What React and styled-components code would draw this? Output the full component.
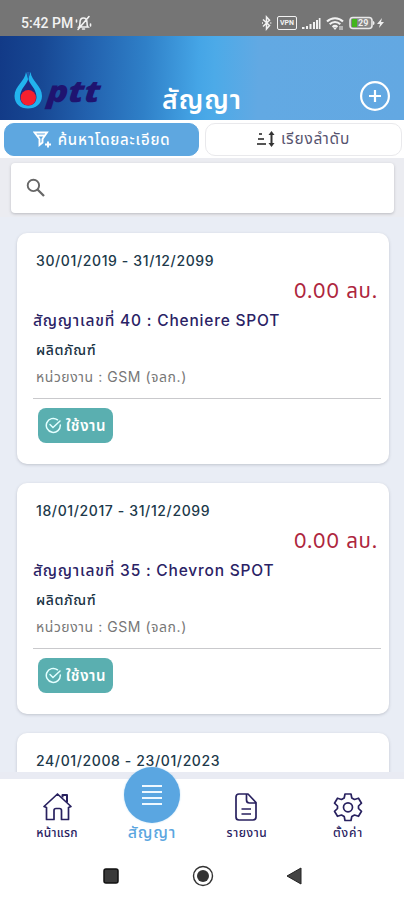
import React from 'react';
import styled, { createGlobalStyle, css } from 'styled-components';

const GlobalStyle = createGlobalStyle`
  * { box-sizing: border-box; }
  body { margin: 0; background: #fff; font-family: "Inter", "Noto Sans Thai", "Noto Sans", sans-serif; }
`;

const Screen = styled.div`
  width: 404px;
  height: 900px;
  display: flex;
  flex-direction: column;
  overflow: hidden;
  background: #fff;
`;

const Text = styled.span`
  display: inline-block;
  white-space: nowrap;
  font-size: ${(p) => p.$size}px;
  font-weight: ${(p) => p.$weight || 400};
  letter-spacing: ${(p) => p.$track || 0}px;
  color: ${(p) => p.$color || 'inherit'};
  line-height: 1.2;
`;

const StatusBar = styled.div`
  flex: none;
  height: 36px;
  background: #757575;
  color: #f2f2f2;
  display: flex;
  justify-content: space-between;
  padding: 10px 19px 0 21px;
`;

const StatusGroup = styled.div`
  display: flex;
  align-items: center;
  height: 26px;
  gap: ${(p) => p.$gap || 0}px;
`;

const Clock = styled(Text)`
  font-family: Roboto, sans-serif;
`;

const Header = styled.header`
  flex: none;
  height: 84px;
  background: linear-gradient(92deg, #123a87 0%, #174793 10%, #2261ae 22%, #2f80c8 36%, #45a5e6 49%, #4caae8 53%, #62a9e3 64%, #63a8e2 100%);
  display: grid;
  grid-template-columns: 135px 1fr 135px;
  padding: 0 13px;
`;

const Brand = styled.div`
  display: flex;
  align-items: flex-start;
  padding-top: 35px;
`;

const BrandName = styled.span`
  font: italic 800 30px/34px "Open Sans", sans-serif;
  color: #1f1470;
  margin-top: 3px;
  margin-left: 3px;
  transform: scaleX(1.17) skewX(-4deg);
  transform-origin: left bottom;
`;

const Title = styled.h1`
  margin: 0;
  padding-top: 46px;
  text-align: center;
  line-height: 1;
  color: #fff;
`;

const AddButton = styled.button`
  justify-self: end;
  margin: 44px 0 0;
  padding: 0;
  width: 32px;
  height: 32px;
  border: 0;
  background: none;
`;

const Tabs = styled.div`
  flex: none;
  height: 38px;
  padding: 3px 2px 0 4px;
  display: grid;
  grid-template-columns: 195px 197px;
  gap: 6px;
  background: #fff;
`;

const Tab = styled.button`
  height: 33px;
  padding: 0;
  border-radius: 10px;
  display: flex;
  align-items: center;
  justify-content: center;
  gap: 6px;
  font-family: inherit;
  border: 1px solid #e9e9ec;
  background: #fff;
  color: #57546f;
  ${(p) =>
    p.$active &&
    css`
      border-color: #5ea7e0;
      background: #5ea7e0;
      color: #fff;
    `}
`;

const SearchArea = styled.div`
  flex: none;
  height: 59px;
  padding: 5px 10px 4px 11px;
  background: #ebecf1;
`;

const SearchBox = styled.div`
  height: 50px;
  border-radius: 4px;
  background: #fff;
  box-shadow: 0 1px 3px rgba(60, 60, 70, 0.28);
  display: flex;
  align-items: center;
  padding-left: 15px;
`;

const List = styled.main`
  flex: none;
  height: 562px;
  padding: 16px 15px 0 17px;
  background: #e9edf5;
  overflow: hidden;
  display: flex;
  flex-direction: column;
  gap: 19px;
  border-bottom: 7px solid #e9ebf3;
`;

const Card = styled.article`
  flex: none;
  height: 231px;
  padding: 13px 8px 0 16px;
  border-radius: 10px;
  background: #fff;
  box-shadow: 0 1px 3px rgba(70, 75, 90, 0.25);
`;

const Row = styled.div`
  height: ${(p) => p.$h}px;
  display: flex;
  align-items: center;
  justify-content: ${(p) => (p.$end ? 'flex-end' : 'flex-start')};
  padding-left: ${(p) => p.$inset || 0}px;
  padding-right: ${(p) => (p.$end ? 3 : 0)}px;
`;

const Divider = styled.hr`
  margin: 8px 0 9px;
  border: 0;
  height: 1px;
  background: #c9c9cc;
`;

const Badge = styled.div`
  width: 75px;
  height: 35px;
  margin-left: 5px;
  border-radius: 8px;
  background: #5aafb0;
  color: #fff;
  display: flex;
  align-items: center;
  justify-content: center;
  gap: 4px;
`;

const BottomNav = styled.nav`
  flex: none;
  height: 73px;
  background: #fff;
  display: grid;
  grid-template-columns: 114px 76px 114px 88px;
`;

const NavItem = styled.a`
  display: flex;
  flex-direction: column;
  align-items: center;
  color: ${(p) => (p.$active ? '#5ba6df' : '#28215f')};
  padding-top: ${(p) => (p.$active ? 0 : 12)}px;
`;

const NavIcon = styled.span`
  width: 32px;
  height: 32px;
  display: block;
`;

const NavLabel = styled(Text)`
  margin-top: ${(p) => p.$gap || 0}px;
`;

const Bubble = styled.span`
  flex: none;
  width: 56px;
  height: 56px;
  margin-top: -12px;
  border-radius: 50%;
  background: #5aa6e1;
  box-shadow: 0 0 2px #b9dcf4;
  display: grid;
  place-content: center;
  gap: 4px;
  z-index: 1;
`;

const Bar = styled.i`
  width: 20px;
  height: 2px;
  background: #eef8ff;
`;

const SystemNav = styled.div`
  flex: none;
  height: 48px;
  padding: 0 102px 0 103px;
  display: flex;
  align-items: center;
  justify-content: space-between;
`;

const Muted = () => (
  <svg width="17" height="16" viewBox="0 0 17 16" fill="none" stroke="currentColor" strokeWidth="1.6" strokeLinecap="round">
    <path d="M4 12h9c-1-1-1-2-1-4.500C12 4.500 10.500 3 8.500 3S5 4.500 5 7.500C5 10 5 11 4 12ZM7.500 14h2M3 14.500 14 1.500M1.500 7V5M15.500 9v2" />
  </svg>
);

const Bluetooth = () => (
  <svg width="11" height="16" viewBox="0 0 11 16" fill="none" stroke="currentColor" strokeWidth="1.5">
    <path d="m2 4.500 6.500 6L5.500 14V2l3 3.300L2 11.500M1 8h1M9.300 8h1" />
  </svg>
);

const VpnBox = styled.span`
  width: 20px;
  height: 14px;
  border: 1.5px solid currentColor;
  border-radius: 2px;
  font: 700 7px/12px Roboto, sans-serif;
  text-align: center;
`;

const Signal = () => (
  <svg width="19" height="13" viewBox="0 0 19 13" fill="currentColor">
    <path d="M0 10h2.500v2H0zM4 9h2v3H4zM7.500 7h2v5h-2zM11 5h2v7h-2zM14 3h2v9h-2zM16.800 1h1.700v11h-1.700z" />
  </svg>
);

const WifiGlyph = () => (
  <svg width="18" height="15" viewBox="0 0 18 15" fill="none" stroke="currentColor" strokeWidth="2">
    <path d="M1 5.500c4.500-4.500 11.500-4.500 16 0M3.700 8.300c3-3 7.600-3 10.600 0M6.500 11c1.500-1.400 3.500-1.400 5 0" />
    <path d="m7 11.500 2 2.500 2-2.500z" fill="currentColor" stroke="none" />
    <path d="M14 10v4M16 10v4" strokeWidth="1" />
  </svg>
);

const Battery = () => (
  <svg width="36" height="14" viewBox="0 0 36 14">
    <rect x="1" y="1.500" width="22" height="11" rx="3" fill="#858585" stroke="#e9e9e9" strokeWidth="1.600" />
    <path d="M3 3h5v8H3z" fill="#43b51e" />
    <path d="M24 5c2 0 2 4 0 4z" fill="#eee" />
    <text x="9" y="10.400" fontFamily="Roboto" fontSize="9" fontWeight="700" fill="#eee">29</text>
    <path d="m33 2-5 6h3l-1 4 5-6h-3z" fill="#eee" />
  </svg>
);

const Flame = () => (
  <svg width="30" height="40" viewBox="0 0 30 40">
    <path d="M13 1C12 10 1.500 15 1.500 25c0 8 6 12.500 13.500 12.500S29 33 29 25C29 15 18.500 10 17.500 1L15.250 8Z" fill="#22b3ee" />
    <path d="M13.800 1 15.250 10 16.700 1Z" fill="#1f5fae" />
    <path d="M15.250 8C13.500 14 7 18 7 26c0 5 3.500 8.500 8.250 8.500S23.500 31 23.500 26c0-8-6.500-12-8.250-18Z" fill="#1d2a83" />
    <circle cx="15.300" cy="26.700" r="7.700" fill="#f5202e" />
  </svg>
);

const Plus = () => (
  <svg width="32" height="32" viewBox="0 0 32 32" fill="none" stroke="#fff">
    <circle cx="16" cy="16" r="13.900" strokeWidth="2.200" />
    <path d="M16 10v12M10 16h12" strokeWidth="2.200" />
  </svg>
);

const Filter = () => (
  <svg width="19" height="18" viewBox="0 0 19 18" fill="none" stroke="currentColor" strokeWidth="1.900">
    <path d="M1.500 1.500h12.500L9.500 8v3.500L6.500 14V8ZM4 4.500h7.500" />
    <path d="M15 10.500v6M12 13.500h6" />
  </svg>
);

const Sort = () => (
  <svg width="18" height="17" viewBox="0 0 18 17" fill="#555">
    <path d="M2 2h3v2H2zM1 7h6v2H1zM0 12h9v2H0z" />
    <path d="m14.500 0 3 4h-2v8h2l-3 4-3-4h2V4h-2z" fill="#333" />
  </svg>
);

const Magnifier = () => (
  <svg width="20" height="20" viewBox="0 0 20 20" fill="none" stroke="#676767" strokeWidth="1.900">
    <circle cx="7.400" cy="7.400" r="5.700" />
    <path d="m11.500 11.500 6.500 6.500" strokeWidth="2.300" />
  </svg>
);

const CheckRing = () => (
  <svg width="17" height="17" viewBox="0 0 17 17" fill="none" stroke="#e4ffff" strokeWidth="1.500" strokeLinecap="round">
    <path d="M12.500 2.800A7 7 0 1 0 15.300 8" />
    <path d="m5 7.500 3 3 7-6.500" />
  </svg>
);

const Home = () => (
  <svg width="32" height="32" viewBox="0 0 32 32" fill="none" stroke="currentColor" strokeWidth="1.700" strokeLinejoin="round">
    <path d="M5.500 28V16.500L3 15.500 16.500 3 30 15.500l-2.500 1V28.500h-7v-9q0-2-2-2H15q-2 0-2 2v9H5.500Z" />
    <path d="M21.500 6.500V4h4.500v7.500" strokeWidth="2" />
  </svg>
);

const Document = () => (
  <svg width="32" height="32" viewBox="0 0 32 32" fill="none" stroke="currentColor" strokeWidth="1.700" strokeLinejoin="round">
    <path d="M17 3H8q-3 0-3 3v20q0 3 3 3h14q3 0 3-3V11.500ZM15.500 3.500V9q0 3 3 3H25M10.500 18h9.500M10.500 23h9.500" />
  </svg>
);

const Gear = () => (
  <svg width="32" height="32" viewBox="0 0 32 32" fill="none" stroke="currentColor" strokeWidth="1.700" strokeLinejoin="round">
    <path d="M13 3h6l.8 4 2.700 1.500 4-1.300 3 5-3 2.800v2.500l3 2.800-3 5-4-1.300-2.700 1.500-.8 4h-6l-.8-4-2.700-1.500-4 1.300-3-5 3-2.800V15l-3-2.800 3-5 4 1.300L12.200 7Z" />
    <circle cx="16" cy="16.300" r="4.500" />
  </svg>
);

const contracts = [
  { date: '30/01/2019 - 31/12/2099', name: 'สัญญาเลขที่ 40 : Cheniere SPOT' },
  { date: '18/01/2017 - 31/12/2099', name: 'สัญญาเลขที่ 35 : Chevron SPOT' },
  { date: '24/01/2008 - 23/01/2023' },
];

function ContractCard({ date, name }) {
  return (
    <Card>
      <Row $h={30} $inset={3}><Text $size={14} $weight={500} $track={0.62} $color="#20394a">{date}</Text></Row>
      {name && (
        <>
          <Row $h={30} $end><Text $size={20.5} $track={0.6} $color="#ae263d">0.00 ลบ.</Text></Row>
          <Row $h={30}><Text $size={15.5} $weight={500} $track={0.8} $color="#2a2265">{name}</Text></Row>
          <Row $h={29} $inset={3}><Text $size={14} $weight={500} $track={0.6} $color="#183244">ผลิตภัณฑ์</Text></Row>
          <Row $h={25} $inset={3}><Text $size={14} $track={0.55} $color="#777">หน่วยงาน : GSM (จลก.)</Text></Row>
          <Divider />
          <Badge><CheckRing /><Text $size={15} $weight={600} $track={0.6}>ใช้งาน</Text></Badge>
        </>
      )}
    </Card>
  );
}

export default function App() {
  return (
    <Screen>
      <GlobalStyle />
      <StatusBar>
        <StatusGroup $gap={2}><Clock $size={14} $weight={500}>5:42 PM</Clock><Muted /></StatusGroup>
        <StatusGroup $gap={5}><Bluetooth /><VpnBox>VPN</VpnBox><Signal /><WifiGlyph /><Battery /></StatusGroup>
      </StatusBar>
      <Header>
        <Brand><Flame /><BrandName>ptt</BrandName></Brand>
        <Title><Text $size={26.5} $weight={600} $track={1}>สัญญา</Text></Title>
        <AddButton aria-label="+"><Plus /></AddButton>
      </Header>
      <Tabs>
        <Tab $active><Filter /><Text $size={15} $weight={500} $track={0.8}>ค้นหาโดยละเอียด</Text></Tab>
        <Tab><Sort /><Text $size={15.5} $track={0.8}>เรียงลำดับ</Text></Tab>
      </Tabs>
      <SearchArea><SearchBox><Magnifier /></SearchBox></SearchArea>
      <List>{contracts.map((c) => <ContractCard key={c.date} {...c} />)}</List>
      <BottomNav>
        <NavItem><NavIcon><Home /></NavIcon><NavLabel $size={12} $weight={500} $track={0.3} $gap={3}>หน้าแรก</NavLabel></NavItem>
        <NavItem $active><Bubble><Bar /><Bar /><Bar /><Bar /></Bubble><NavLabel $size={16} $weight={500} $track={0.8}>สัญญา</NavLabel></NavItem>
        <NavItem><NavIcon><Document /></NavIcon><NavLabel $size={12} $weight={500} $track={0.6} $gap={3}>รายงาน</NavLabel></NavItem>
        <NavItem><NavIcon><Gear /></NavIcon><NavLabel $size={12} $weight={500} $track={0.8} $gap={3}>ตั้งค่า</NavLabel></NavItem>
      </BottomNav>
      <SystemNav>
        <svg width="16" height="16"><rect x="1" y="1" width="14" height="14" rx="2" fill="#3a3a3a" stroke="#111" strokeWidth="1.500" /></svg>
        <svg width="22" height="22"><circle cx="11" cy="11" r="9.500" fill="none" stroke="#333" strokeWidth="1.400" /><circle cx="11" cy="11" r="6" fill="#333" /></svg>
        <svg width="16" height="18"><path d="M15 1v16L1 9Z" fill="#444" stroke="#222" /></svg>
      </SystemNav>
    </Screen>
  );
}
